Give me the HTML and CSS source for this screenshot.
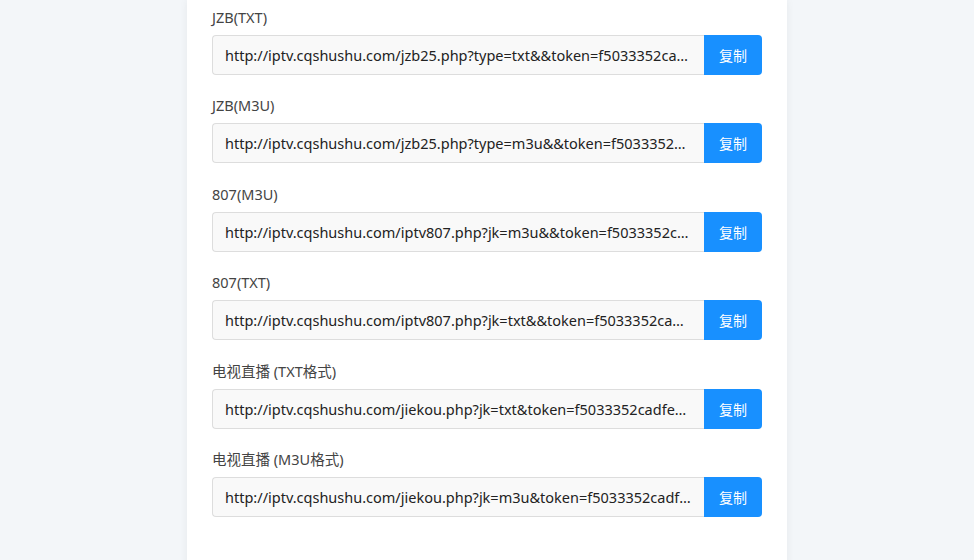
FILE: index.html
```html
<!DOCTYPE html>
<html lang="zh-CN">
<head>
    <meta charset="UTF-8">
    <meta name="viewport" content="width=device-width, initial-scale=1.0">
    <title>接口地址</title>
    <link rel="stylesheet" href="styles.css">
</head>
<body>

<div class="container">
    <div class="link-item">
        <label>JZB(TXT)</label>
        <div class="link-row">
            <input type="text" readonly value="http://iptv.cqshushu.com/jzb25.php?type=txt&&token=f5033352cadfe1c2a8b7e9d4">
            <button class="copy-btn">复制</button>
        </div>
    </div>

    <div class="link-item">
        <label>JZB(M3U)</label>
        <div class="link-row">
            <input type="text" readonly value="http://iptv.cqshushu.com/jzb25.php?type=m3u&&token=f5033352cadfe1c2a8b7e9d4">
            <button class="copy-btn">复制</button>
        </div>
    </div>

    <div class="link-item">
        <label>807(M3U)</label>
        <div class="link-row">
            <input type="text" readonly value="http://iptv.cqshushu.com/iptv807.php?jk=m3u&&token=f5033352cadfe1c2a8b7e9d4">
            <button class="copy-btn">复制</button>
        </div>
    </div>

    <div class="link-item">
        <label>807(TXT)</label>
        <div class="link-row">
            <input type="text" readonly value="http://iptv.cqshushu.com/iptv807.php?jk=txt&&token=f5033352cadfe1c2a8b7e9d4">
            <button class="copy-btn">复制</button>
        </div>
    </div>

    <div class="link-item">
        <label>电视直播 (TXT格式)</label>
        <div class="link-row">
            <input type="text" readonly value="http://iptv.cqshushu.com/jiekou.php?jk=txt&token=f5033352cadfe1c2a8b7e9d4">
            <button class="copy-btn">复制</button>
        </div>
    </div>

    <div class="link-item">
        <label>电视直播 (M3U格式)</label>
        <div class="link-row">
            <input type="text" readonly value="http://iptv.cqshushu.com/jiekou.php?jk=m3u&token=f5033352cadfe1c2a8b7e9d4">
            <button class="copy-btn">复制</button>
        </div>
    </div>
</div>

</body>
</html>
```

FILE: styles.css
```css
body {
    margin: 0;
    font-family: "Noto Sans", "Noto Sans CJK SC", sans-serif;
    background-color: #f3f6f9;
}

.container {
    width: 550px;
    margin: 0 auto;
    padding: 7px 25px 40px;
    background-color: #fff;
    box-shadow: 0 0 8px rgba(0, 0, 0, 0.06);
}

.link-item {
    margin-bottom: 20.4px;
}

.link-item label {
    display: block;
    font-size: 14.5px;
    line-height: 20px;
    color: #444;
    margin-bottom: 8px;
}

.link-row {
    display: flex;
    width: 550px;
}

.link-row input {
    flex: 1;
    min-width: 0;
    height: 40px;
    box-sizing: border-box;
    padding: 0 12px;
    font-family: inherit;
    font-size: 14.5px;
    color: #222;
    background-color: #f9f9f9;
    border: 1px solid #ddd;
    border-right: none;
    border-radius: 4px 0 0 4px;
    text-overflow: ellipsis;
    outline: none;
}

.copy-btn {
    width: 58px;
    height: 40px;
    border: none;
    border-radius: 0 4px 4px 0;
    background-color: #1890ff;
    color: #fff;
    font-family: inherit;
    font-size: 14px;
    cursor: pointer;
}
```
